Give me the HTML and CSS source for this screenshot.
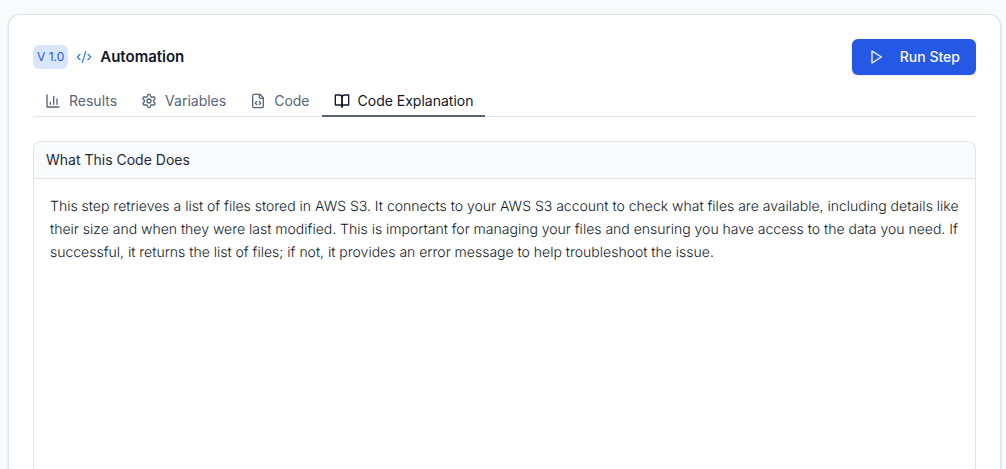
FILE: index.html
```html
<!DOCTYPE html>
<html lang="en">
<head>
  <meta charset="UTF-8" />
  <meta name="viewport" content="width=device-width, initial-scale=1" />
  <title>Automation</title>
  <link rel="stylesheet" href="styles.css">
</head>
<body>

<main class="step-card">
  <header class="step-header">
    <span class="version">V 1.0</span>
    <svg class="icon icon-step" viewBox="0 0 24 24"><path d="m18 16 4-4-4-4"/><path d="m6 8-4 4 4 4"/><path d="m14.5 4-5 16"/></svg>
    <h1>Automation</h1>
    <button type="button" class="run-btn">
      <svg class="icon" viewBox="0 0 24 24"><path d="m6 3 14 9-14 9V3z"/></svg>
      Run Step
    </button>
  </header>

  <div class="tabs" role="tablist">
    <button type="button" class="tab" role="tab" aria-selected="false">
      <svg class="icon" viewBox="0 0 24 24"><path d="M3 3v18h18"/><path d="M8 17v-3"/><path d="M13 17V5"/><path d="M18 17V9"/></svg>
      Results
    </button>
    <button type="button" class="tab" role="tab" aria-selected="false">
      <svg class="icon" viewBox="0 0 24 24"><path d="M12.22 2h-.44a2 2 0 0 0-2 2v.18a2 2 0 0 1-1 1.73l-.43.25a2 2 0 0 1-2 0l-.15-.08a2 2 0 0 0-2.73.73l-.22.38a2 2 0 0 0 .73 2.73l.15.1a2 2 0 0 1 1 1.72v.51a2 2 0 0 1-1 1.74l-.15.09a2 2 0 0 0-.73 2.73l.22.38a2 2 0 0 0 2.73.73l.15-.08a2 2 0 0 1 2 0l.43.25a2 2 0 0 1 1 1.73V20a2 2 0 0 0 2 2h.44a2 2 0 0 0 2-2v-.18a2 2 0 0 1 1-1.73l.43-.25a2 2 0 0 1 2 0l.15.08a2 2 0 0 0 2.73-.73l.22-.39a2 2 0 0 0-.73-2.73l-.15-.08a2 2 0 0 1-1-1.74v-.5a2 2 0 0 1 1-1.74l.15-.09a2 2 0 0 0 .73-2.73l-.22-.38a2 2 0 0 0-2.73-.73l-.15.08a2 2 0 0 1-2 0l-.43-.25a2 2 0 0 1-1-1.73V4a2 2 0 0 0-2-2z"/><circle cx="12" cy="12" r="3"/></svg>
      Variables
    </button>
    <button type="button" class="tab" role="tab" aria-selected="false">
      <svg class="icon" viewBox="0 0 24 24"><path d="M15 2H6a2 2 0 0 0-2 2v16a2 2 0 0 0 2 2h12a2 2 0 0 0 2-2V7Z"/><path d="M14 2v4a2 2 0 0 0 2 2h4"/><path d="m10 12.500-2 2.500 2 2.500"/><path d="m14 12.500 2 2.500-2 2.500"/></svg>
      Code
    </button>
    <button type="button" class="tab active" role="tab" aria-selected="true">
      <svg class="icon" viewBox="0 0 24 24"><path d="M2 3h6a4 4 0 0 1 4 4v14a3 3 0 0 0-3-3H2z"/><path d="M22 3h-6a4 4 0 0 0-4 4v14a3 3 0 0 1 3-3h7z"/></svg>
      Code Explanation
    </button>
  </div>

  <section class="panel">
    <h2>What This Code Does</h2>
    <p>This step retrieves a list of files stored in AWS S3. It connects to your AWS S3 account to check what files are available, including details like their size and when they were last modified. This is important for managing your files and ensuring you have access to the data you need. If successful, it returns the list of files; if not, it provides an error message to help troubleshoot the issue.</p>
  </section>
</main>

</body>
</html>
```
FILE: styles.css
```css
* {
  box-sizing: border-box;
}
body {
  margin: 0;
  padding: 14px 5px 0 8px;
  height: 100vh;
  overflow: hidden;
  background: #f8fafc;
  color: #0f172a;
  font-family: Inter, 'Liberation Sans', sans-serif;
  font-size: 14px;
  line-height: 20px;
}
h1, h2, p {
  margin: 0;
}
button {
  border: none;
  background: none;
  font: inherit;
  cursor: pointer;
}
.icon {
  width: 16px;
  height: 16px;
  flex-shrink: 0;
  fill: none;
  stroke: currentColor;
  stroke-width: 2;
  stroke-linecap: round;
  stroke-linejoin: round;
}
.step-card {
  display: flex;
  flex-direction: column;
  min-height: 100%;
  padding: 24px 24px 0;
  background: #fff;
  border: 1px solid #dde4ee;
  border-bottom: none;
  border-radius: 12px 12px 0 0;
  box-shadow: 0 1px 3px rgba(15, 23, 42, 0.12);
}

/* Header */
.step-header {
  display: flex;
  align-items: center;
  gap: 8px;
}
.step-header h1 {
  font-size: 15px;
  font-weight: 600;
  line-height: 24px;
}
.version {
  padding: 2px 4px;
  border-radius: 6px;
  background: #d8e6fd;
  color: #2558e5;
  font-size: 12px;
}
.icon-step {
  color: #3b82f6;
}
.run-btn {
  display: flex;
  align-items: center;
  gap: 16px;
  height: 36px;
  margin-left: auto;
  padding: 0 16px;
  border-radius: 6px;
  background: #2558e5;
  color: #f8fafc;
  font-weight: 500;
  box-shadow: 0 1px 2px rgba(15, 23, 42, 0.1);
}

/* Tabs */
.tabs {
  display: flex;
  margin-top: 10px;
  border-bottom: 1px solid #dde4ee;
}
.tab {
  display: flex;
  align-items: center;
  gap: 8px;
  margin-bottom: -1px;
  padding: 6px 12px 4px;
  border-bottom: 2px solid transparent;
  color: #56657a;
}
.tab.active {
  border-bottom-color: #56657a;
  color: #0f172a;
}

/* Explanation */
.panel {
  flex-grow: 1;
  margin-top: 24px;
  border: 1px solid #dde4ee;
  border-bottom: none;
  border-radius: 8px 8px 0 0;
  overflow: hidden;
}
.panel h2 {
  padding: 8px 12px;
  border-bottom: 1px solid #dde4ee;
  background: #f8fafc;
  color: #1e293b;
  font-size: 14px;
  font-weight: 400;
}
.panel p {
  padding: 16px;
  color: #0f172a;
  font-weight: 300;
  line-height: 23px;
  text-rendering: geometricPrecision;
}
```
